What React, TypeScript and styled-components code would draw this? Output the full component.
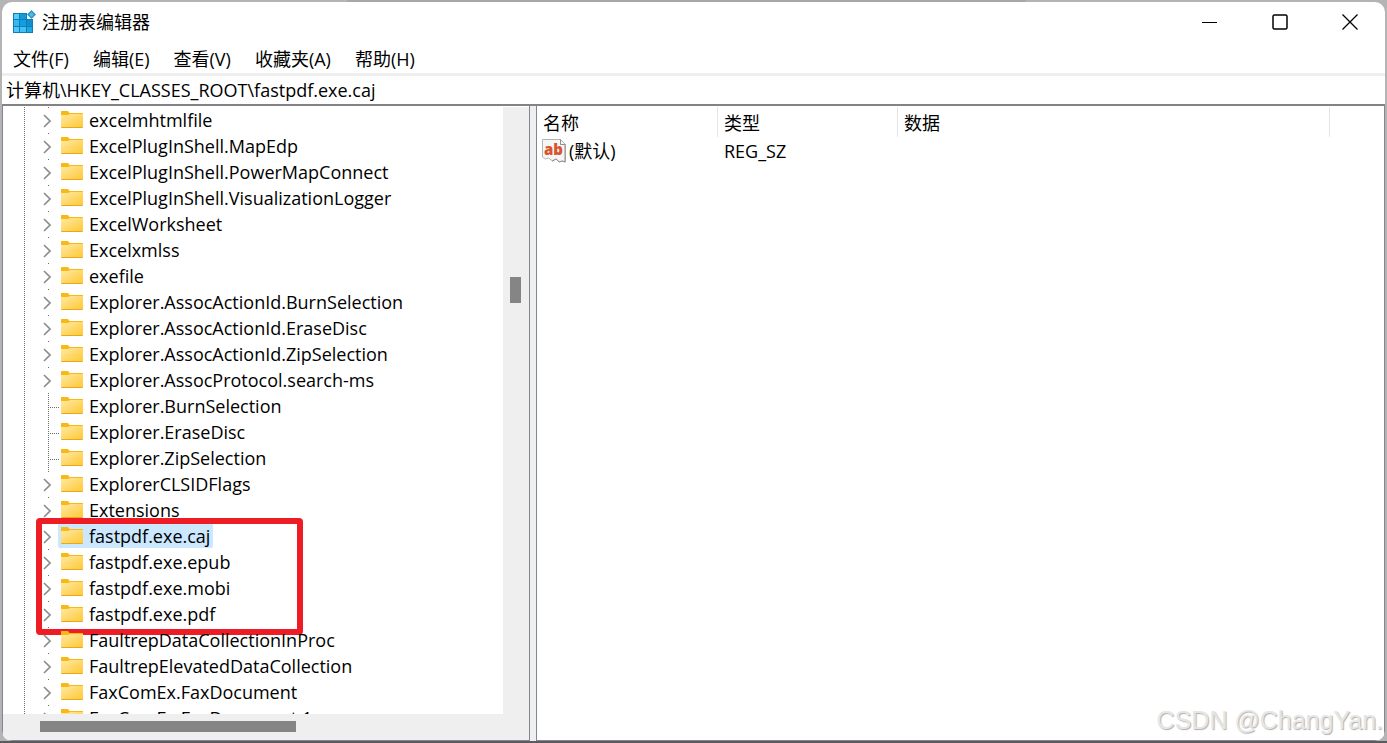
import React from 'react';
import styled, { createGlobalStyle, css } from 'styled-components';

const GlobalStyle = createGlobalStyle`
  *, *::before, *::after { box-sizing: border-box; }
  body { margin: 0; background: #b4b4b4; }
  body, button, input, table {
    font-family: 'Open Sans', 'Noto Sans CJK SC', sans-serif;
    font-size: 18px;
    line-height: 26px;
    color: #000;
  }
  button { border: 0; padding: 0; background: none; }
`;

const Desktop = styled.div`
  height: 100vh;
  padding: 2px 2px 0;
  background: linear-gradient(90deg, #b4b4b4 0 25%, #a8a8a8 25% 74%, #b4b4b4 74%);
  border-bottom: 2px solid #5b5b5d;
`;

const Window = styled.main`
  position: relative;
  display: flex;
  flex-direction: column;
  height: 100%;
  overflow: hidden;
  background: #fff;
  border-radius: 10px;
`;

const TitleBar = styled.header`
  display: flex;
  align-items: center;
  height: 42px;
  padding: 0 0 2px 10px;
`;

const Title = styled.h1`
  flex: 1;
  margin: 0 0 0 6px;
  font-size: 18px;
  font-weight: 400;
  line-height: 26px;
`;

const CaptionButton = styled.button`
  display: flex;
  align-items: center;
  justify-content: center;
  width: 70px;
  height: 40px;
`;

const MenuBar = styled.nav`
  display: flex;
  gap: 24px;
  height: 29px;
  padding-left: 11px;
`;

const AddressBar = styled.div`
  display: flex;
  height: 33px;
  border-top: 3px solid #efefef;
  border-bottom: 2px solid #838387;
`;

const AddressInput = styled.input`
  flex: 1;
  border: 0;
  padding: 0 4px;
  outline: 0;
  background: #fff;
`;

const Panes = styled.div`
  flex: 1;
  display: flex;
  min-height: 0;
`;

const TreePane = styled.section`
  flex: 0 0 528px;
  display: grid;
  grid-template-columns: 1fr 26px;
  grid-template-rows: 1fr 26px;
  padding: 1px 0 0;
  border: solid #838793;
  border-width: 0 1px 1px;
`;

const Tree = styled.ul`
  margin: 0;
  padding: 0 0 0 21px;
  list-style: none;
  overflow: hidden;
  min-height: 0;
`;

const dots = '#6e6e6e 0 1px, transparent 1px 2px';

const Branch = styled.li`
  background: repeating-linear-gradient(180deg, ${dots}) 0 0 / 1px 100% no-repeat;
`;

const Group = styled.ul<{ $marked: boolean }>`
  position: relative;
  margin: 0;
  padding: 0 0 0 18px;
  list-style: none;
  ${p => p.$marked && css`
    &::after {
      content: '';
      position: absolute;
      inset: -5px 200px -8px 12px;
      border: 6px solid #ee1c24;
      border-radius: 4px;
      pointer-events: none;
    }
  `}
`;

const Row = styled.li<{ $leaf: boolean }>`
  display: flex;
  align-items: flex-start;
  height: 26px;
  ${p => p.$leaf ? css`
    background:
      repeating-linear-gradient(180deg, ${dots}) 6px 0 / 1px 100% no-repeat,
      repeating-linear-gradient(90deg, ${dots}) 6px 14px / 11px 1px no-repeat;
  ` : css`
    background: linear-gradient(#6e6e6e, #6e6e6e) 6px 0 / 1px 1px no-repeat;
  `}
`;

const Expander = styled.button`
  display: flex;
  align-items: center;
  justify-content: center;
  width: 12px;
  height: 26px;
  padding: 2px 2px 0 0;
`;

const Spacer = styled.span`
  width: 12px;
`;

const Label = styled.span<{ $selected: boolean }>`
  display: flex;
  align-items: center;
  gap: 6px;
  height: 25px;
  margin-left: 4px;
  padding: 0 3px;
  border-radius: 2px;
  line-height: 24px;
  white-space: nowrap;
  background: ${p => (p.$selected ? '#cce8ff' : 'transparent')};
`;

const VerticalTrack = styled.div`
  padding: 170px 7px 0;
  background: #efefef;
`;

const HorizontalTrack = styled.div`
  grid-column: 1 / -1;
  padding: 7px 0 0 37px;
  background: #efefef;
`;

const Thumb = styled.div<{ $vertical?: boolean }>`
  width: ${p => (p.$vertical ? '11px' : '256px')};
  height: ${p => (p.$vertical ? '26px' : '11px')};
  background: #858585;
`;

const Splitter = styled.div`
  flex: 0 0 6px;
  background: #efefef;
`;

const ValuesPane = styled.section`
  flex: 1;
  min-width: 0;
  border: solid #838793;
  border-width: 0 1px 1px;
  padding: 1px 0 0;
`;

const ValuesTable = styled.table`
  width: 100%;
  table-layout: fixed;
  border-collapse: separate;
  border-spacing: 0;
  th, td { padding: 0 0 0 6px; text-align: left; font-weight: 400; }
  th { height: 30px; padding-top: 2px; border-right: 1px solid #e5e5e5; }
  th:last-child { border-right: 0; }
  td { height: 28px; }
  td:first-child { padding-left: 5px; }
`;

const NameColumn = styled.col`
  width: 181px;
`;

const TypeColumn = styled.col`
  width: 180px;
`;

const TrailingColumn = styled.col`
  width: 54px;
`;

const ValueName = styled.div`
  display: flex;
  align-items: center;
  gap: 3px;
`;

const Watermark = styled.div`
  position: absolute;
  right: 2px;
  bottom: 5px;
  font-family: 'Liberation Sans', sans-serif;
  font-size: 25px;
  line-height: 32px;
  color: #e6e6e6;
  text-shadow: 1px 1px 1px #b0b0b0;
`;

const AppIcon = () => (
  <svg width="24" height="24" viewBox="0 0 24 24" aria-hidden="true">
    <rect x="1" y="3" width="20" height="20" fill="#0a80b8" />
    <rect x="2" y="4" width="5" height="5" fill="#5bcaf5" />
    <rect x="8" y="4" width="6" height="5" fill="#159bd7" />
    <rect x="2" y="10" width="5" height="6" fill="#35b9ee" />
    <rect x="8" y="10" width="6" height="6" fill="#169ddb" />
    <rect x="15" y="10" width="5" height="6" fill="#0f91cf" />
    <rect x="2" y="17" width="5" height="5" fill="#52c8f6" />
    <rect x="8" y="17" width="6" height="5" fill="#42c2f4" />
    <rect x="15" y="17" width="5" height="5" fill="#20a8e2" />
    <path d="M15 3h6v6h-6z" fill="#fff" />
    <path d="M19.500 0 24 4.500 19.500 9 15 4.500z" fill="#2e93c2" />
    <path d="m19.500 2 2.500 2.500-2.500 2.500L17 4.500z" fill="#58b9df" />
  </svg>
);

const FolderIcon = () => (
  <svg width="22" height="17" viewBox="0 0 22 17" aria-hidden="true">
    <defs>
      <linearGradient id="folder" x1="0" y1="0" x2="1" y2="1">
        <stop offset="0" stopColor="#ffe9a2" />
        <stop offset="1" stopColor="#ffc938" />
      </linearGradient>
    </defs>
    <path d="M0 .5Q0 0 .5 0H7l1.500 2H21.500q.5 0 .5.500V6H0z" fill="#f9b814" />
    <path d="M0 4h7l2-1h13v13H0z" fill="url(#folder)" />
    <path d="M0 16h22q0 1-1 1H1q-1 0-1-1" fill="#eaa71e" />
  </svg>
);

const Chevron = () => (
  <svg width="8" height="14" viewBox="0 0 8 14" fill="none" stroke="#8c8c8c" strokeWidth="1.600" aria-hidden="true">
    <path d="m1 1 6 6-6 6" />
  </svg>
);

const StringIcon = () => (
  <svg width="24" height="24" viewBox="0 0 24 24" aria-hidden="true">
    <path d="M.5.500h18l5 5V23l-3-1-3 1-3-3-4 2-4-3-3 1-3-2z" fill="#f5f5f5" stroke="#b4b4b4" />
    <path d="M18.500.500v5h5M23 6v17l-3-1-3 1-3-3-4 2" fill="none" stroke="#8f8f8f" />
    <text x="2" y="16" fontFamily="'Open Sans', sans-serif" fontWeight="800" fontSize="15" fill="#d9532f">ab</text>
  </svg>
);

const menus = ['文件(F)', '编辑(E)', '查看(V)', '收藏夹(A)', '帮助(H)'];

type Key = { name: string; leaf?: boolean };
type KeyGroup = { marked?: boolean; keys: Key[] };

const groups: KeyGroup[] = [
  {
    keys: [
      { name: 'excelmhtmlfile' },
      { name: 'ExcelPlugInShell.MapEdp' },
      { name: 'ExcelPlugInShell.PowerMapConnect' },
      { name: 'ExcelPlugInShell.VisualizationLogger' },
      { name: 'ExcelWorksheet' },
      { name: 'Excelxmlss' },
      { name: 'exefile' },
      { name: 'Explorer.AssocActionId.BurnSelection' },
      { name: 'Explorer.AssocActionId.EraseDisc' },
      { name: 'Explorer.AssocActionId.ZipSelection' },
      { name: 'Explorer.AssocProtocol.search-ms' },
      { name: 'Explorer.BurnSelection', leaf: true },
      { name: 'Explorer.EraseDisc', leaf: true },
      { name: 'Explorer.ZipSelection', leaf: true },
      { name: 'ExplorerCLSIDFlags' },
      { name: 'Extensions' },
    ],
  },
  {
    marked: true,
    keys: [
      { name: 'fastpdf.exe.caj' },
      { name: 'fastpdf.exe.epub' },
      { name: 'fastpdf.exe.mobi' },
      { name: 'fastpdf.exe.pdf' },
    ],
  },
  {
    keys: [
      { name: 'FaultrepDataCollectionInProc' },
      { name: 'FaultrepElevatedDataCollection' },
      { name: 'FaxComEx.FaxDocument' },
      { name: 'FaxComEx.FaxDocument.1' },
    ],
  },
];

const selectedKey = 'fastpdf.exe.caj';

export default function App() {
  return (
    <>
      <GlobalStyle />
      <Desktop>
        <Window>
          <TitleBar>
            <AppIcon />
            <Title>注册表编辑器</Title>
            <CaptionButton aria-label="最小化">
              <svg width="16" height="16" viewBox="0 0 16 16" stroke="#000"><path d="M0 8.500h15" /></svg>
            </CaptionButton>
            <CaptionButton aria-label="最大化">
              <svg width="16" height="16" viewBox="0 0 16 16" fill="none" stroke="#000" strokeWidth="1.500">
                <rect x="1" y="1" width="14" height="14" rx="1.500" />
              </svg>
            </CaptionButton>
            <CaptionButton aria-label="关闭">
              <svg width="16" height="16" viewBox="0 0 16 16" stroke="#000" strokeWidth="1.300"><path d="m.5.500 15 15m0-15-15 15" /></svg>
            </CaptionButton>
          </TitleBar>
          <MenuBar>
            {menus.map(m => <button key={m}>{m}</button>)}
          </MenuBar>
          <AddressBar>
            <AddressInput aria-label="地址" defaultValue={'计算机\\HKEY_CLASSES_ROOT\\fastpdf.exe.caj'} />
          </AddressBar>
          <Panes>
            <TreePane>
              <Tree>
                {groups.map(group => (
                  <Branch key={group.keys[0].name}>
                    <Group $marked={!!group.marked}>
                      {group.keys.map(k => (
                        <Row key={k.name} $leaf={!!k.leaf}>
                          {k.leaf ? <Spacer /> : <Expander aria-label={`展开 ${k.name}`}><Chevron /></Expander>}
                          <Label $selected={k.name === selectedKey}>
                            <FolderIcon />
                            {k.name}
                          </Label>
                        </Row>
                      ))}
                    </Group>
                  </Branch>
                ))}
              </Tree>
              <VerticalTrack><Thumb $vertical /></VerticalTrack>
              <HorizontalTrack><Thumb /></HorizontalTrack>
            </TreePane>
            <Splitter />
            <ValuesPane>
              <ValuesTable>
                <colgroup>
                  <NameColumn />
                  <TypeColumn />
                  <col />
                  <TrailingColumn />
                </colgroup>
                <thead>
                  <tr><th>名称</th><th>类型</th><th>数据</th><th aria-hidden="true" /></tr>
                </thead>
                <tbody>
                  <tr>
                    <td><ValueName><StringIcon />(默认)</ValueName></td>
                    <td>REG_SZ</td>
                    <td />
                    <td />
                  </tr>
                </tbody>
              </ValuesTable>
            </ValuesPane>
          </Panes>
          <Watermark>CSDN @ChangYan.</Watermark>
        </Window>
      </Desktop>
    </>
  );
}
